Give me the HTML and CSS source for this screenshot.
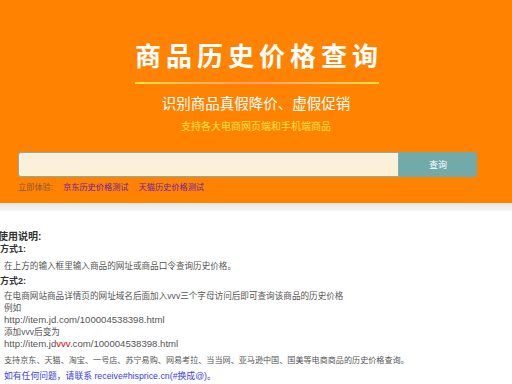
FILE: index.html
```html
<!DOCTYPE html>
<html lang="zh-CN">
<head>
    <meta charset="UTF-8">
    <meta name="viewport" content="width=device-width, initial-scale=1.0">
    <title>商品历史价格查询</title>
    <link rel="stylesheet" href="styles.css">
</head>
<body>
    <header class="banner">
        <h1>商品历史价格查询</h1>
        <div class="divider"></div>
        <p class="slogan">识别商品真假降价、虚假促销</p>
        <p class="support">支持各大电商网页端和手机端商品</p>
        <form class="search" onsubmit="return false">
            <input type="text" class="search-input">
            <button type="submit" class="search-btn">查询</button>
        </form>
        <div class="try">
            <span class="try-label">立即体验:</span>
            <a href="#">京东历史价格测试</a>
            <a href="#">天猫历史价格测试</a>
        </div>
    </header>
    <div class="band"></div>

    <main class="guide">
        <h2>使用说明:</h2>
        <h3>方式1:</h3>
        <p class="step">在上方的输入框里输入商品的网址或商品口令查询历史价格。</p>
        <h3 class="second">方式2:</h3>
        <div class="step lines">
            <div>在电商网站商品详情页的网址域名后面加入vvv三个字母访问后即可查询该商品的历史价格</div>
            <div>例如</div>
            <div class="url">http://item.jd.com/100004538398.html</div>
            <div>添加vvv后变为</div>
            <div class="url">http://item.jd<span class="red">vvv</span>.com/100004538398.html</div>
        </div>
        <p class="note">支持京东、天猫、淘宝、一号店、苏宁易购、网易考拉、当当网、亚马逊中国、国美等电商商品的历史价格查询。</p>
        <p class="contact">如有任何问题，请联系 receive#hisprice.cn(#换成@)。</p>
    </main>
</body>
</html>
```

FILE: styles.css
```css
body {
    margin: 0;
    padding: 0;
    font-family: "Liberation Sans", "Noto Sans CJK SC", sans-serif;
    background-color: #fff;
    overflow: hidden;
}

.banner {
    background-color: #ff8300;
    padding: 42px 0 8px;
    display: flex;
    flex-direction: column;
    align-items: center;
}

.banner h1 {
    margin: 0;
    color: #fff;
    font-size: 26px;
    line-height: 30px;
    font-weight: bold;
    letter-spacing: 5px;
    padding-left: 6px;
}

.divider {
    width: 244px;
    height: 2px;
    margin-top: 10px;
    margin-left: 2px;
    background: linear-gradient(to right, #ffe14a, #ff9a6a 45%, #ffb070 65%, #ffe14a);
}

.slogan {
    margin: 10px 0 0;
    color: #fff;
    font-size: 14.5px;
    line-height: 20px;
}

.support {
    margin: 6px 0 0;
    color: #ffe04a;
    font-size: 10px;
    line-height: 14px;
}

.search {
    align-self: stretch;
    display: flex;
    margin: 18px 35px 0 18px;
    height: 25px;
}

.search-input {
    flex: 1;
    margin: 0;
    box-sizing: border-box;
    height: 25px;
    background-color: #fbf0da;
    border: 1px solid #7fb0ad;
    border-radius: 3px 0 0 3px;
    outline: none;
}

.search-btn {
    width: 78px;
    height: 25px;
    margin: 0;
    border: none;
    border-radius: 0 3px 3px 0;
    background-color: #72a9a9;
    color: #fff;
    font-family: inherit;
    font-size: 9px;
    cursor: pointer;
}

.try {
    align-self: stretch;
    margin: 4px 0 0 18px;
    font-size: 8.2px;
    line-height: 14px;
    display: flex;
    gap: 10px;
}

.try-label {
    color: #86583a;
}

.try a {
    color: #6a1bb0;
    text-decoration: none;
}

.band {
    height: 8px;
    background: linear-gradient(to bottom, #e6e6e6, #f6f6f6);
}

.guide {
    padding-top: 20px;
    color: #555;
}

.guide h2 {
    margin: 0;
    font-size: 10px;
    line-height: 12px;
    color: #333;
    text-indent: -2px;
}

.guide h3 {
    margin: 0;
    font-size: 9px;
    line-height: 12px;
    color: #333;
}

.guide h3.second {
    margin-top: 3px;
}

.step {
    margin: 5px 0 0 4px;
    font-size: 8.6px;
    line-height: 12px;
}

.lines {
    margin-top: 3px;
}

.url {
    font-size: 9.6px;
}

.red {
    color: #e00;
}

.note {
    margin: 5px 0 0 4px;
    font-size: 8.1px;
    line-height: 12px;
}

.contact {
    margin: 3px 0 0 4px;
    font-size: 8.8px;
    line-height: 12px;
    color: #3b3bf0;
}
```
